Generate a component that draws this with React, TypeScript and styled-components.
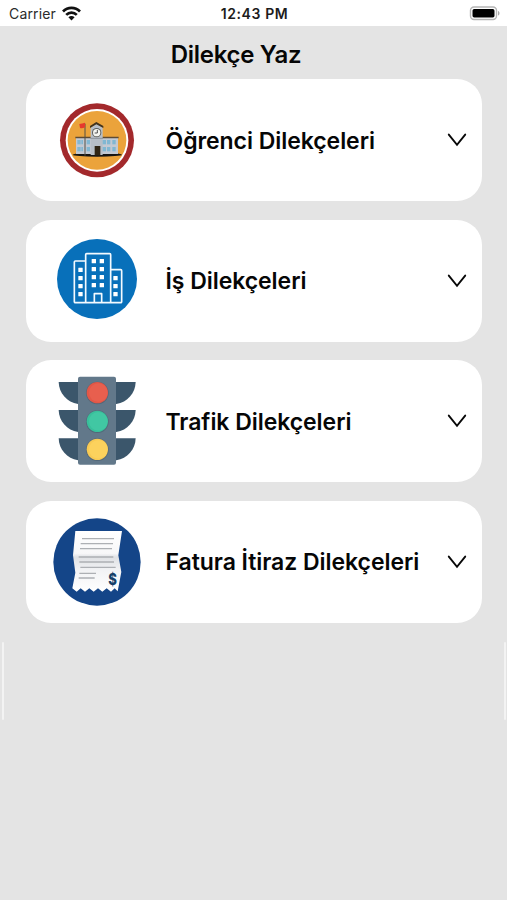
import React from "react";
import styled, { createGlobalStyle } from "styled-components";

const GlobalStyle = createGlobalStyle`
  * { box-sizing: border-box; }
  body { margin: 0; background: #e4e4e4; font-family: Inter, "Liberation Sans", sans-serif; color: #060606; }
`;

const Screen = styled.div`
  position: relative;
  height: 900px;
  overflow: hidden;
  background: #e4e4e4;
`;

const StatusBar = styled.header`
  display: grid;
  grid-template-columns: 1fr auto 1fr;
  align-items: center;
  height: 26px;
  padding: 0 7px 0 9px;
  background: #fff;
`;

const Carrier = styled.div`
  display: flex;
  align-items: center;
  gap: 6px;
  font-size: 14px;
  letter-spacing: 0.15px;
  color: #2b2b2b;
`;

const Clock = styled.div`
  padding-top: 1px;
  font-size: 14px;
  font-weight: 600;
  letter-spacing: 0.6px;
  color: #1c1c1c;
`;

const BatterySlot = styled.div`
  display: flex;
  justify-content: flex-end;
`;

const Title = styled.h1`
  margin: 0 0 0 -35px;
  height: 53px;
  padding-top: 2px;
  line-height: 53px;
  font-size: 24px;
  font-weight: 600;
  letter-spacing: -0.3px;
  text-align: center;
`;

const CardList = styled.main`
  display: flex;
  flex-direction: column;
  gap: 18.6px;
  padding: 0 25px 0 26px;
`;

const Card = styled.button`
  display: flex;
  align-items: center;
  height: 122px;
  padding: 0 15px 0 20px;
  border: 0;
  border-radius: 25px;
  background: #fff;
  color: inherit;
  font-family: inherit;
  text-align: left;
`;

const CardLabel = styled.span`
  flex: 1;
  margin-left: 19.5px;
  padding-top: 1px;
  font-size: 23px;
  font-weight: 600;
  white-space: nowrap;
  letter-spacing: -0.05px;
`;

const Artwork = styled.svg`
  display: block;
  flex: none;
  width: 100px;
  height: 100px;
`;

const EdgeHighlight = styled.i<{ $side: "left" | "right" }>`
  position: absolute;
  top: 642px;
  ${(p) => (p.$side === "left" ? "left: 2px" : "right: 1px")};
  width: 2px;
  height: 78px;
  border-radius: 1px;
  background: #f3f3f3;
`;

const WifiIcon = () => (
  <svg width="19" height="15" viewBox="0 0 19 15">
    <g fill="none" stroke="#111" strokeWidth="2.7">
      <path d="M1 5.5C5.8.6 13.2.6 18 5.5" />
      <path d="M4.2 8.9c3-3 7.6-3 10.6 0" />
    </g>
    <path d="M6.4 11.3c1.8-1.7 4.4-1.7 6.2 0L9.5 14.5z" fill="#111" />
  </svg>
);

const BatteryIcon = () => (
  <svg width="31" height="15" viewBox="0 0 31 15">
    <rect x="1.5" y="1" width="26" height="12.5" rx="3.5" fill="#fff" stroke="#b5b5b5" strokeWidth="1.4" />
    <rect x="3.5" y="3" width="22" height="8.5" rx="1.7" fill="#000" />
    <path d="M29 5v4.6c2-.6 2-4 0-4.6z" fill="#aaa" />
  </svg>
);

const ChevronIcon = () => (
  <svg width="20" height="14" viewBox="0 0 20 14">
    <path d="M1.8 1.6 10 11.8 18.2 1.6" fill="none" stroke="#080808" strokeWidth="1.9" strokeLinecap="round" />
  </svg>
);

const SchoolArt = () => (
  <Artwork viewBox="-12 -15 300 300">
    <circle cx="141" cy="136" r="111" fill="#a3292c" />
    <circle cx="141" cy="136" r="94" fill="#fff" />
    <circle cx="141" cy="136" r="88" fill="#eba33b" />
    <ellipse cx="142" cy="179" rx="74" ry="6" fill="#151514" />
    <path d="M78 128h126v49H78z" fill="#c3c9d2" />
    <path d="M76 125h48v5H76zm80 0h50v5h-50z" fill="#5f4b34" />
    <path d="M122 98l17-12 19 12v82h-36z" fill="#b7bec7" />
    <path d="M120 99v-6l19-12 21 12v6l-21-11z" fill="#40321d" />
    <circle cx="140" cy="113" r="14" fill="#5d5d59" />
    <circle cx="140" cy="113" r="11" fill="#f5f5f1" />
    <path d="M142 105v9h-8" fill="none" stroke="#333" strokeWidth="2.5" />
    <path d="M121 130h38" stroke="#8c929a" strokeWidth="3" />
    <path d="M134 153h17v28h-17z" fill="#302515" />
    <g fill="#81b7d2">
      {[82, 110, 158, 171, 187].map((x) =>
        [135, 156].map((y) => <rect key={`${x}-${y}`} x={x} y={y} width="10" height="13" />),
      )}
      <path d="M94 135h5v13h-5zm0 21h5v13h-5z" />
    </g>
    <path d="M105 86v96" stroke="#555047" strokeWidth="3" />
    <path d="M88 87q8-1 17-4v14q-8 4-15 2z" fill="#e63a2d" />
  </Artwork>
);

const OfficeArt = () => (
  <Artwork viewBox="-12 -4 300 300">
    <circle cx="141" cy="140" r="120" fill="#0870ba" />
    <g fill="none" stroke="#f3faff" strokeWidth="5" strokeLinejoin="round">
      <path d="M107 209V67q0-3 3-3h69q3 0 3 3v142" />
      <path d="M107 86H76q-3 0-3 3v119q0 3 3 3h136q3 0 3-3V115q0-3-3-3h-30" />
      <path d="M133 211v-27h22v27" />
    </g>
    <g fill="#fff">
      {[80, 104, 128, 152].map((y) => (
        <React.Fragment key={y}>
          <rect x="125" y={y} width="13" height="13" rx="1" />
          <rect x="149" y={y} width="13" height="13" rx="1" />
        </React.Fragment>
      ))}
      {[106, 131, 155, 179].map((y) => (
        <rect key={y} x="85" y={y} width="13" height="13" rx="1" />
      ))}
      {[131, 155, 179].map((y) => (
        <rect key={y} x="190" y={y} width="13" height="13" rx="1" />
      ))}
    </g>
  </Artwork>
);

const TrafficArt = () => (
  <Artwork viewBox="-12 4 300 300">
    {[37, 121, 206].map((y) => (
      <path key={y} d={`M26 ${y}H257C256 ${y + 34} 232 ${y + 61} 199 ${y + 66}H84C51 ${y + 61} 27 ${y + 34} 26 ${y}z`} fill="#3b566b" />
    ))}
    <rect x="84" y="21" width="114" height="264" rx="6" fill="#62788a" />
    {[
      [69, "#e25747", "#ed6654"],
      [155, "#39bf9b", "#48cdaa"],
      [239, "#f8ca54", "#ffd965"],
    ].map(([y, edge, face]) => (
      <React.Fragment key={y}>
        <circle cx="142" cy={Number(y) + 1} r="34" fill="#526778" />
        <circle cx="142" cy={y} r="32" fill={String(edge)} />
        <circle cx="145" cy={y} r="28" fill={String(face)} opacity="0.55" />
      </React.Fragment>
    ))}
  </Artwork>
);

const InvoiceArt = () => (
  <Artwork viewBox="0 0 300 300">
    <defs>
      <linearGradient id="paper" x1="0" y1="0" x2="0" y2="1">
        <stop offset="0" stopColor="#fff" />
        <stop offset="0.37" stopColor="#f7f7f8" />
        <stop offset="0.43" stopColor="#dfe1e4" />
        <stop offset="0.65" stopColor="#f2f3f5" />
        <stop offset="1" stopColor="#fff" />
      </linearGradient>
    </defs>
    <circle cx="153" cy="150" r="131" fill="#144588" />
    <path
      d="M88 57H228L217 130 226 180 215 238 206 229 195 239 182 229 169 239 156 229 143 239 130 229 117 239 104 229 92 239 79 229 88 182 81 130z"
      fill="url(#paper)"
    />
    <g stroke="#adb0b4" strokeWidth="4">
      <path d="M108 80h96M104 95h97M102 110h96M98 135h104M100 150h104M103 166h106M100 184h50M98 198h48" />
    </g>
    <text x="187" y="219" fontFamily="Inter, sans-serif" fontSize="48" fontWeight="800" fill="#153f68" textLength="26" lengthAdjust="spacingAndGlyphs">
      $
    </text>
  </Artwork>
);

const categories = [
  { label: "Öğrenci Dilekçeleri", Art: SchoolArt },
  { label: "İş Dilekçeleri", Art: OfficeArt },
  { label: "Trafik Dilekçeleri", Art: TrafficArt },
  { label: "Fatura İtiraz Dilekçeleri", Art: InvoiceArt },
];

export default function App() {
  return (
    <Screen>
      <GlobalStyle />
      <StatusBar>
        <Carrier>
          Carrier
          <WifiIcon />
        </Carrier>
        <Clock>12:43 PM</Clock>
        <BatterySlot>
          <BatteryIcon />
        </BatterySlot>
      </StatusBar>
      <Title>Dilekçe Yaz</Title>
      <CardList>
        {categories.map(({ label, Art }) => (
          <Card key={label}>
            <Art />
            <CardLabel>{label}</CardLabel>
            <ChevronIcon />
          </Card>
        ))}
      </CardList>
      <EdgeHighlight $side="left" />
      <EdgeHighlight $side="right" />
    </Screen>
  );
}
